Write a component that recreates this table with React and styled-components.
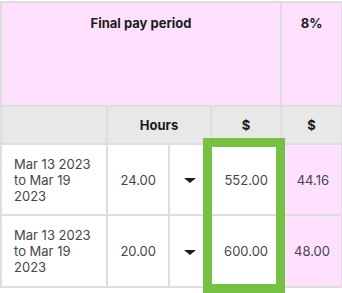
import React from 'react';
import styled, { createGlobalStyle } from 'styled-components';

const GlobalStyle = createGlobalStyle`
  body {
    margin: 0;
    background: #ffffff;
    font-family: 'Inter', 'Liberation Sans', sans-serif;
  }
`;

const Wrapper = styled.div`
  position: relative;
  width: 342px;
  height: 293px;
  padding-top: 1px;
  box-sizing: border-box;
  overflow: hidden;
`;

const Table = styled.table`
  width: 341px;
  border-collapse: collapse;
  table-layout: fixed;
`;

const Cell = styled.td`
  border: 2px solid #dedede;
  padding: 0 12px;
  font-size: 13px;
  color: #45454f;
  background: ${props => (props.pink ? '#ffe1ff' : '#ffffff')};
  text-align: ${props => props.align || 'right'};
  vertical-align: middle;
  line-height: 16px;
`;

const TopHead = styled.th`
  border: 2px solid #dedede;
  background: #ffe1ff;
  height: 90px;
  padding: 12px 12px 0;
  vertical-align: top;
  text-align: center;
  font-size: 13px;
  font-weight: 700;
  color: #1c1c1c;
  line-height: 16px;
`;

const SubHead = styled.th`
  border: 2px solid #dedede;
  background: #e8e8e8;
  height: 36px;
  padding: 0;
  text-align: center;
  font-size: 13px;
  font-weight: 700;
  color: #1c1c1c;
`;

const Row = styled.tr`
  height: ${props => props.h}px;
`;

const Caret = styled.span`
  display: inline-block;
  width: 0;
  height: 0;
  border-left: 6px solid transparent;
  border-right: 6px solid transparent;
  border-top: 5px solid #1c1c1c;
  vertical-align: middle;
`;

const Highlight = styled.div`
  position: absolute;
  left: 203px;
  top: 138px;
  width: 82px;
  height: 155px;
  border: 9px solid #76c143;
  box-sizing: border-box;
  pointer-events: none;
`;

const rows = [
  { period: 'Mar 13 2023 to Mar 19 2023', hours: '24.00', amount: '552.00', pct: '44.16', h: 71 },
  { period: 'Mar 13 2023 to Mar 19 2023', hours: '20.00', amount: '600.00', pct: '48.00', h: 72 }
];

const App = () => (
  <Wrapper>
    <GlobalStyle />
    <Table>
      <colgroup>
        <col style={{ width: 106 }} />
        <col style={{ width: 62 }} />
        <col style={{ width: 42 }} />
        <col style={{ width: 70 }} />
        <col style={{ width: 61 }} />
      </colgroup>
      <thead>
        <tr>
          <TopHead colSpan={4}>Final pay period</TopHead>
          <TopHead>8%</TopHead>
        </tr>
        <tr>
          <SubHead />
          <SubHead colSpan={2}>Hours</SubHead>
          <SubHead>$</SubHead>
          <SubHead>$</SubHead>
        </tr>
      </thead>
      <tbody>
        {rows.map((r, i) => (
          <Row key={i} h={r.h}>
            <Cell align="left">{r.period}</Cell>
            <Cell>{r.hours}</Cell>
            <Cell align="center">
              <Caret />
            </Cell>
            <Cell>{r.amount}</Cell>
            <Cell pink>{r.pct}</Cell>
          </Row>
        ))}
      </tbody>
    </Table>
    <Highlight />
  </Wrapper>
);

export default App;
